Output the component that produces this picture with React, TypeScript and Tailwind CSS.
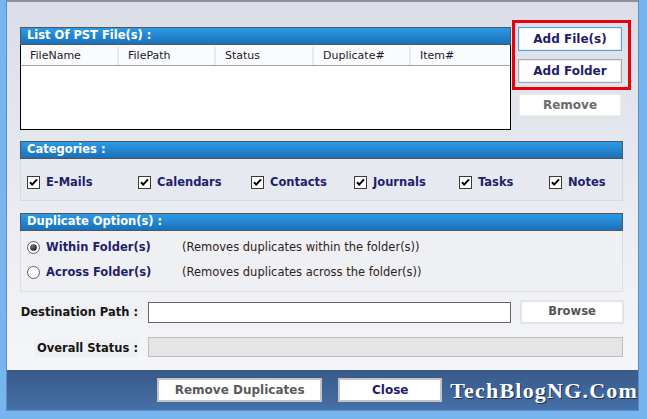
import React from 'react'

const FONT = { fontFamily: '"DejaVu Sans", Verdana, sans-serif' }

const COLUMNS = [
  { label: 'FileName', width: 'w-[98px]' },
  { label: 'FilePath', width: 'w-[97px]' },
  { label: 'Status', width: 'w-[98px]' },
  { label: 'Duplicate#', width: 'w-[97px]' },
  { label: 'Item#', width: 'flex-1' },
]

const CATEGORIES = [
  { label: 'E-Mails', width: 'w-[111px]' },
  { label: 'Calendars', width: 'w-[113px]' },
  { label: 'Contacts', width: 'w-[103px]' },
  { label: 'Journals', width: 'w-[105px]' },
  { label: 'Tasks', width: 'w-[90px]' },
  { label: 'Notes', width: 'flex-1' },
]

function SectionHeader({ title }: { title: string }) {
  return (
    <div className="flex h-[18px] items-center border border-[#4f5660] bg-gradient-to-b from-[#2d9ae4] to-[#1a71b9] pl-[6px] text-[11.5px] font-bold text-white">
      {title}
    </div>
  )
}

function CheckBox() {
  return (
    <svg width="13" height="13" viewBox="0 0 13 13" className="shrink-0">
      <rect x="0.5" y="0.5" width="12" height="12" fill="#fff" stroke="#3a3a3a" />
      <path d="M3 6.2 L5.2 8.6 L10 3.4" fill="none" stroke="#000" strokeWidth="2" />
    </svg>
  )
}

function Radio({ checked }: { checked?: boolean }) {
  return (
    <svg width="13" height="13" viewBox="0 0 13 13" className="shrink-0">
      <defs>
        <radialGradient id="dot" cx="40%" cy="35%" r="70%">
          <stop offset="0%" stopColor="#777" />
          <stop offset="100%" stopColor="#111" />
        </radialGradient>
      </defs>
      <circle cx="6.5" cy="6.5" r="6" fill="#fdfdfd" stroke="#5c5c5c" />
      {checked && <circle cx="6.5" cy="6.5" r="3.3" fill="url(#dot)" />}
    </svg>
  )
}

function SideButton({
  label,
  tone,
}: {
  label: string
  tone: 'focus' | 'normal' | 'disabled'
}) {
  const outer =
    tone === 'focus'
      ? 'border-[#4fa3ea]'
      : tone === 'normal'
        ? 'border-[#a9a9a9]'
        : 'border-[#e4e4e4]'
  const text = tone === 'disabled' ? 'text-[#6b6b6b]' : 'text-[#1d1d6a]'
  return (
    <button
      className={`flex h-[24px] w-[104px] items-center justify-center border ${outer} bg-white text-[12px] font-bold ${text}`}
    >
      <span className="flex h-full w-full items-center justify-center border border-[#eeeeee]">
        {label}
      </span>
    </button>
  )
}

function FooterButton({ label, width, dark }: { label: string; width: string; dark?: boolean }) {
  return (
    <button
      className={`flex h-[24px] ${width} items-center justify-center border-2 border-[#c4c4c4] bg-white text-[12px] font-bold ${dark ? 'text-[#1d1d6a]' : 'text-[#5a5a5a]'}`}
    >
      {label}
    </button>
  )
}

export default function App() {
  return (
    <div
      className="flex h-[419px] w-[647px] flex-col overflow-hidden bg-[#78b4ee] pb-[8px] pl-[6px] pr-[8px]"
      style={FONT}
    >
      <div className="relative flex flex-1 flex-col border-x border-[#5a8bcb]">
        {/* Main dialog body */}
        <div className="flex h-[370px] flex-col border-t-2 border-[#8f9196] bg-gradient-to-b from-[#dbdee7] to-[#f5f6f9] pl-[13px] pt-[25px]">
          <div className="flex gap-[7px]">
            <div className="flex w-[491px] flex-col">
              <SectionHeader title="List Of PST File(s) :" />
              <div className="h-[85px] border border-t-0 border-black bg-white">
                <div className="flex h-[21px] border-b border-[#a3a3a3] bg-[#fafbfd] pt-[2px] text-[11px] text-[#1c1a2c]">
                  {COLUMNS.map((c, i) => (
                    <div
                      key={c.label}
                      className={`${c.width} flex items-center pl-[9px] ${i < COLUMNS.length - 1 ? 'border-r-2 border-[#e2e9f3]' : ''}`}
                    >
                      {c.label}
                    </div>
                  ))}
                </div>
              </div>
            </div>
            <div className="flex flex-col gap-[8px]">
              <SideButton label="Add File(s)" tone="focus" />
              <SideButton label="Add Folder" tone="normal" />
              <div className="mt-[2px]">
                <SideButton label="Remove" tone="disabled" />
              </div>
            </div>
          </div>

          {/* Categories */}
          <div className="mt-[11px] w-[603px]">
            <SectionHeader title="Categories :" />
            <div className="flex h-[42px] items-center border border-t-0 border-[#d9dbe0] bg-[#e6e9f0] pl-[6px] pt-[6px]">
              {CATEGORIES.map((c) => (
                <div key={c.label} className={`flex ${c.width} items-center gap-[6px]`}>
                  <CheckBox />
                  <span className="text-[11.5px] font-bold text-[#221e6c]">{c.label}</span>
                </div>
              ))}
            </div>
          </div>

          {/* Duplicate options */}
          <div className="mt-[12px] w-[603px]">
            <SectionHeader title="Duplicate Option(s) :" />
            <div className="flex h-[61px] flex-col justify-center gap-[8px] border border-t-0 border-[#dcdee2] bg-[#eef0f4] pb-[2px] pl-[6px]">
              <div className="flex items-center">
                <Radio checked />
                <span className="ml-[6px] w-[136px] text-[11.5px] font-bold text-[#221e6c]">
                  Within Folder(s)
                </span>
                <span className="text-[11.5px] text-[#2f2318]">
                  (Removes duplicates within the folder(s))
                </span>
              </div>
              <div className="flex items-center">
                <Radio />
                <span className="ml-[6px] w-[136px] text-[11.5px] font-bold text-[#221e6c]">
                  Across Folder(s)
                </span>
                <span className="text-[11.5px] text-[#2f2318]">
                  (Removes duplicates across the folder(s))
                </span>
              </div>
            </div>
          </div>

          {/* Destination */}
          <div className="mt-[8px] flex h-[24px] items-center">
            <div className="flex h-[14px] w-[122px] items-center justify-end bg-[#eef0f3] pr-[4px] pt-[2px] text-[11.5px] font-bold text-[#151515]">
              Destination Path :
            </div>
            <div className="ml-[6px] h-[21px] w-[363px] border border-[#666] bg-white" />
            <button className="ml-[9px] flex h-[24px] w-[104px] items-center justify-center border-2 border-[#e3e4e6] bg-white text-[11.5px] font-bold text-[#555]">
              Browse
            </button>
          </div>

          <div className="mt-[13px] flex h-[20px] items-center">
            <div className="flex h-[14px] w-[122px] items-center justify-end pr-[4px] pt-[3px] text-[11.5px] font-bold text-[#151515]">
              <span className="bg-[#eef0f3] pl-[3px]">Overall Status :</span>
            </div>
            <div className="ml-[6px] h-[20px] w-[475px] border border-[#bdbdbd] bg-[#e5e5e5]" />
          </div>
        </div>

        {/* Footer bar */}
        <div className="flex flex-1 items-center border-b border-[#5a8bcb] bg-gradient-to-b from-[#385a89] to-[#4670a9] pl-[150px]">
          <FooterButton label="Remove Duplicates" width="w-[168px]" />
          <div className="ml-[16px]">
            <FooterButton label="Close" width="w-[104px]" dark />
          </div>
          <span
            className="ml-[8px] whitespace-nowrap text-[22px] font-bold tracking-[1.2px] text-white [text-shadow:1px_1px_0_#1d2f4d]"
            style={{ fontFamily: '"Liberation Serif", "DejaVu Serif", serif' }}
          >
            TechBlogNG.Com
          </span>
        </div>

        {/* Highlight around the add buttons */}
        <div className="pointer-events-none absolute left-[505px] top-[20px] h-[70px] w-[119px] border-[3px] border-[#e8000b]" />
      </div>
    </div>
  )
}
